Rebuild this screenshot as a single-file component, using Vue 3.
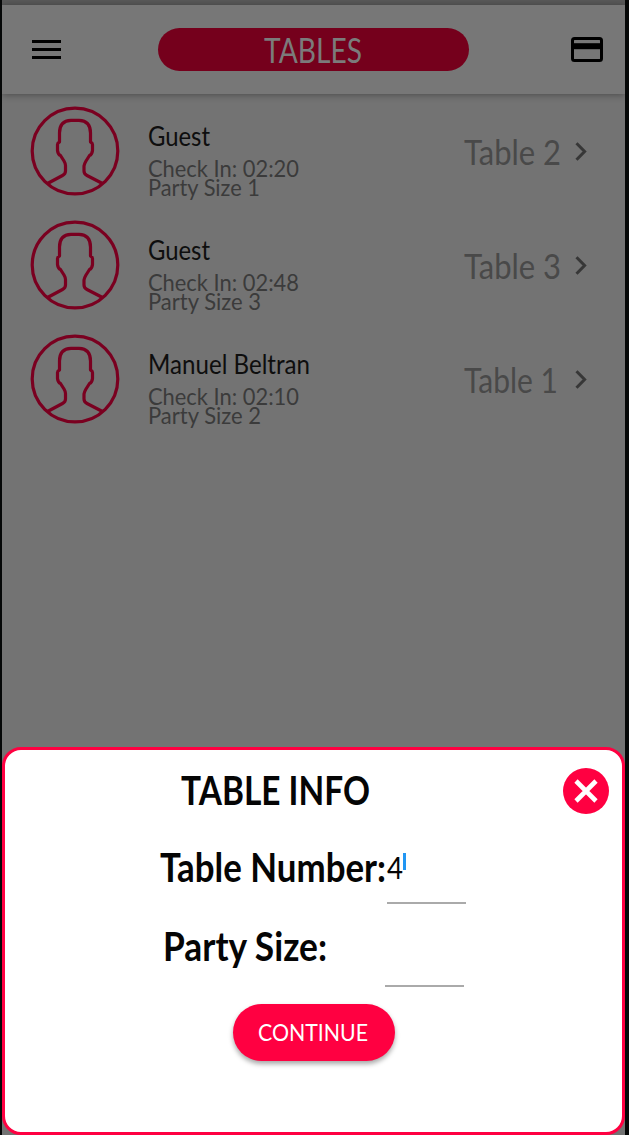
<script setup>
import { h } from 'vue'

// Text set to an exact width; the box is as tall as the capitals and ends on the baseline.
const FitText = (props) =>
  h('svg', { width: props.w, height: props.cap, overflow: 'visible' }, [
    h(
      'text',
      {
        x: 0,
        y: props.cap,
        'font-size': props.cap / 0.72,
        textLength: props.w,
        lengthAdjust: 'spacingAndGlyphs',
        fill: 'currentColor',
      },
      props.text
    ),
  ])
FitText.props = ['text', 'w', 'cap']

const guests = [
  { name: 'Guest', nameW: 62, time: 'Check In: 02:20', party: 'Party Size 1', partyW: 112, table: 'Table 2', tableW: 97 },
  { name: 'Guest', nameW: 62, time: 'Check In: 02:48', party: 'Party Size 3', partyW: 113, table: 'Table 3', tableW: 97 },
  { name: 'Manuel Beltran', nameW: 162, time: 'Check In: 02:10', party: 'Party Size 2', partyW: 113, table: 'Table 1', tableW: 94 },
]
</script>

<template>
  <div class="screen">
    <div class="status"></div>
    <header class="bar">
      <svg class="menu" width="29" height="19" viewBox="0 0 29 19">
        <path d="M0 1.5H29M0 9.5H29M0 17.5H29" stroke="#000" stroke-width="3" />
      </svg>
      <div class="pill"><FitText text="TABLES" :w="98" :cap="24.5" /></div>
      <svg class="card" width="32" height="25" viewBox="0 0 32 25">
        <rect x="1.5" y="1.5" width="29" height="22" rx="2" fill="none" stroke="#000" stroke-width="3" />
        <path d="M2 9.2H30" stroke="#000" stroke-width="6" />
      </svg>
    </header>

    <main class="list">
      <div v-for="(g, i) in guests" :key="i" class="row">
        <svg class="avatar" width="90" height="90" viewBox="0 0 90 90" fill="none" stroke="#7a0020" stroke-width="3.2" stroke-linejoin="round">
          <circle cx="45" cy="45" r="42.8" />
          <path d="M17.5 77.5L32.500 69.500Q35.500 68 35.500 65V59.500Q35.500 57.500 34 55L30.500 49.500Q28 48.500 27.500 44.500V38.500Q27.500 37 29.500 36V27C29.500 18 34 14.500 41 14.300H49C56 14.500 60.500 18 60.500 27V36Q62.500 37 62.500 38.500V44.500Q62 48.500 59.500 49.500L56 55Q54.500 57.500 54 60V65Q54 68 57 69.500L72.500 77.500" />
        </svg>
        <div class="info">
          <FitText class="name" :text="g.name" :w="g.nameW" :cap="19" />
          <FitText class="time" :text="g.time" :w="151" :cap="16.5" />
          <FitText class="party" :text="g.party" :w="g.partyW" :cap="16.5" />
        </div>
        <div class="table">
          <FitText :text="g.table" :w="g.tableW" :cap="24.5" />
        </div>
        <svg class="chevron" width="12" height="19" viewBox="0 0 12 19">
          <path d="M1.5 1.3L9.6 9.5L1.5 17.7" fill="none" stroke="#373737" stroke-width="3" />
        </svg>
      </div>
    </main>

    <section class="sheet">
      <div class="head">
        <FitText text="TABLE INFO" :w="189" :cap="29" />
        <svg class="close" width="46" height="46" viewBox="0 0 46 46">
          <circle cx="23" cy="23" r="23" fill="#ff0041" />
          <path d="M13 13L33 33M33 13L13 33" stroke="#fff" stroke-width="4.6" />
        </svg>
      </div>
      <div class="field number">
        <FitText text="Table Number:" :w="226" :cap="29" />
        <div class="input">
          <FitText class="value" text="4" :w="16" :cap="22" />
          <span class="caret"></span>
        </div>
      </div>
      <div class="field size">
        <FitText text="Party Size:" :w="164" :cap="29" />
        <div class="input"></div>
      </div>
      <button class="continue"><FitText text="CONTINUE" :w="110" :cap="17" /></button>
    </section>
  </div>
</template>

<style>
body {
  background: #050707;
}
</style>

<style scoped>
.screen {
  box-sizing: border-box;
  width: 623px;
  height: 1135px;
  margin-left: 2px;
  display: flex;
  flex-direction: column;
  overflow: hidden;
  background: #737373;
  font-family: Lato, "Liberation Sans", sans-serif;
}
svg {
  display: block;
  flex: none;
}
.status {
  flex: none;
  height: 5px;
  background: #595959;
}
.bar {
  flex: none;
  box-sizing: border-box;
  height: 89px;
  padding: 0 22px 0 30px;
  display: flex;
  align-items: center;
  background: #777;
  box-shadow: 0 1px 7px rgba(0, 0, 0, 0.35);
}
.pill {
  width: 311px;
  height: 43px;
  margin-left: 97px;
  border-radius: 22px;
  background: #75001c;
  color: #7b7b7b;
  display: flex;
  align-items: center;
  justify-content: center;
}
.pill svg {
  margin: 2px 0 0 -2px;
}
.card {
  margin-left: auto;
}
.list {
  flex: none;
  height: 653px;
  padding-top: 12px;
  box-sizing: border-box;
}
.row {
  height: 114px;
  display: flex;
  align-items: flex-start;
}
.avatar {
  margin-left: 28px;
}
.info {
  width: 316px;
  margin-left: 28px;
  padding-top: 20.5px;
  color: #3b3b3b;
}
.name {
  color: #0e0e0e;
}
.time {
  margin-top: 14px;
}
.party {
  margin-top: 2.5px;
}
.table {
  width: 111px;
  padding-top: 34px;
  color: #494949;
}
.chevron {
  margin-top: 36px;
}
.sheet {
  box-sizing: border-box;
  height: 388px;
  border: 3px solid #ff0041;
  border-radius: 19px;
  background: #fff;
  color: #050505;
  display: flex;
  flex-direction: column;
  font-weight: 700;
}
.head {
  height: 46px;
  margin-top: 18px;
  padding: 0 13px 0 176px;
  display: flex;
  align-items: center;
  justify-content: space-between;
}
.head > :first-child {
  margin-top: -1px;
}
.field {
  display: flex;
  align-items: flex-start;
}
.number {
  margin: 38.5px 0 0 155px;
}
.size {
  margin: 28px 0 0 158px;
}
.input {
  box-sizing: border-box;
  width: 79px;
  border-bottom: 2px solid #aaa;
  display: flex;
  align-items: flex-start;
  font-weight: 400;
}
.number .input {
  height: 51px;
  margin-left: 1px;
}
.size .input {
  height: 55px;
  margin-left: 58px;
}
.value {
  margin-top: 4px;
}
.caret {
  width: 3px;
  height: 17px;
  background: #2196f3;
}
.continue {
  width: 162px;
  height: 57px;
  margin: 17px 0 0 228px;
  padding: 0;
  border: 0;
  border-radius: 29px;
  background: #ff0041;
  color: #fff;
  font-family: inherit;
  font-weight: 400;
  display: flex;
  align-items: center;
  justify-content: center;
  box-shadow: 0 3px 5px rgba(0, 0, 0, 0.35);
}
.continue svg {
  margin: 1px 0 0 -2px;
}
</style>
